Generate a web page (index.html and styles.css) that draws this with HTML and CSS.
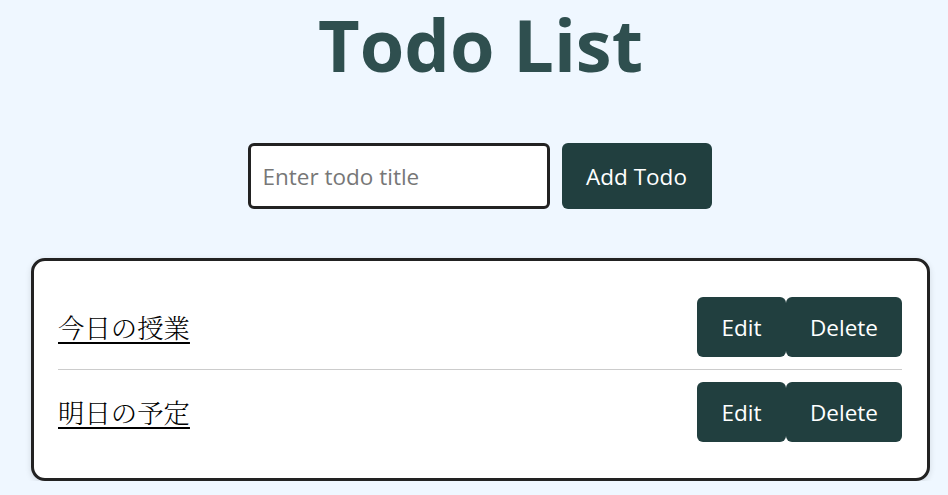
FILE: index.html
```html
<!DOCTYPE html>
<html lang="ja">
<head>
<meta charset="utf-8">
<title>Todo List</title>
<link rel="stylesheet" href="styles.css">
</head>
<body>
<main class="app">
  <h1 class="title">Todo List</h1>
  <form class="add-form">
    <input class="add-input" type="text" placeholder="Enter todo title">
    <button class="btn btn-add" type="button">Add Todo</button>
  </form>
  <ul class="todo-card">
    <li class="todo-row">
      <a class="todo-link" href="#">今日の授業</a>
      <div class="actions">
        <button class="btn btn-edit" type="button">Edit</button>
        <button class="btn btn-delete" type="button">Delete</button>
      </div>
    </li>
    <li class="todo-row">
      <a class="todo-link" href="#">明日の予定</a>
      <div class="actions">
        <button class="btn btn-edit" type="button">Edit</button>
        <button class="btn btn-delete" type="button">Delete</button>
      </div>
    </li>
  </ul>
</main>
</body>
</html>
```
FILE: styles.css
```css
* { box-sizing: border-box; }

html, body {
  margin: 0;
  padding: 0;
  background: #eff7ff;
  font-family: "Open Sans", "Noto Sans", "Noto Sans CJK JP", sans-serif;
}

.app {
  display: flex;
  flex-direction: column;
  align-items: center;
  padding: 0 18px 0 31px;
}

.title {
  margin: -5px 0 0 0;
  font-size: 72px;
  line-height: normal;
  font-weight: 700;
  color: #2f4f4f;
  letter-spacing: 0;
}

.add-form {
  display: flex;
  gap: 12px;
  margin-top: 50px;
  margin-left: -2px;
}

.add-input {
  width: 302px;
  height: 66px;
  border: 3px solid #222;
  border-radius: 6px;
  padding: 0 12px;
  font-family: inherit;
  font-size: 22.5px;
  background: #fff;
  outline: none;
}

.add-input::placeholder { color: #777; }

.btn {
  background: #213f3f;
  color: #fff;
  border: none;
  border-radius: 6px;
  font-family: inherit;
  font-size: 22.5px;
  cursor: pointer;
}

.btn-add {
  width: 150px;
  height: 66px;
}

.todo-card {
  list-style: none;
  margin: 49px 0 0 0;
  align-self: stretch;
  background: #fff;
  border: 3px solid #222;
  border-radius: 14px;
  padding: 24px 25px 24px 24px;
  box-shadow: 0 2px 6px rgba(0, 0, 0, 0.12);
}

.todo-row {
  display: flex;
  align-items: center;
  justify-content: space-between;
  padding: 12px 0;
}

.todo-row + .todo-row {
  border-top: 1px solid #ccc;
}

.todo-link {
  font-family: "Noto Serif CJK JP", "IPAexMincho", "IPAMincho", "Noto Sans CJK JP", serif;
  font-weight: 300;
  font-size: 26.4px;
  color: #000;
  text-decoration: underline;
  text-decoration-thickness: 2px;
  text-underline-offset: 4px;
}

.actions {
  display: flex;
}

.btn-edit {
  width: 89px;
  height: 60px;
}

.btn-delete {
  width: 116px;
  height: 60px;
}
```
